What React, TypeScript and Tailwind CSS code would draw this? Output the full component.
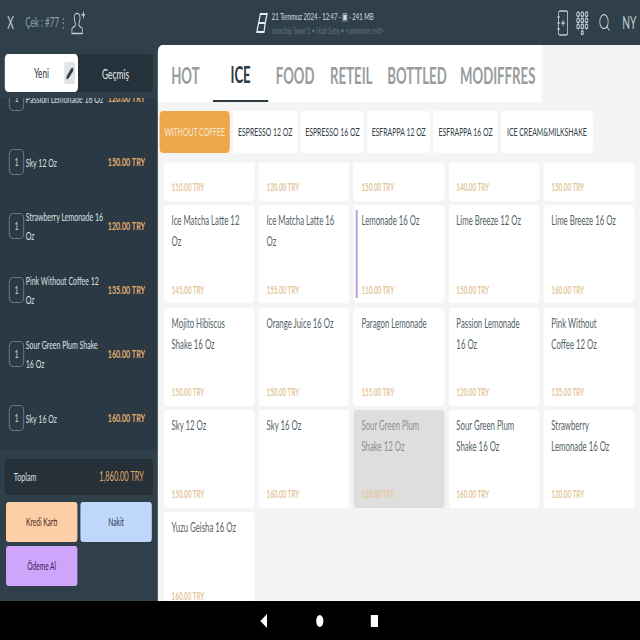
import { Pencil, Search } from "lucide-react";

const orderItems = [
  { name: "Passion Lemonade 16 Oz", price: "120.00 TRY" },
  { name: "Sky 12 Oz", price: "150.00 TRY" },
  { name: "Strawberry Lemonade 16 Oz", price: "120.00 TRY" },
  { name: "Pink Without Coffee 12 Oz", price: "135.00 TRY" },
  { name: "Sour Green Plum Shake 16 Oz", price: "160.00 TRY" },
  { name: "Sky 16 Oz", price: "160.00 TRY" },
];

const tabs = [
  { name: "HOT", width: "w-[92px]" },
  { name: "ICE", width: "w-[92px]", active: true },
  { name: "FOOD", width: "w-[90px]" },
  { name: "RETEIL", width: "w-[97px]" },
  { name: "BOTTLED", width: "w-[122px]" },
  { name: "MODIFFRES", width: "w-[147px]" },
];

const chips = [
  { name: "WITHOUT COFFEE", width: "w-[117px]", active: true },
  { name: "ESPRESSO 12 OZ", width: "w-[108px]" },
  { name: "ESPRESSO 16 OZ", width: "w-[106px]" },
  { name: "ESFRAPPA 12 OZ", width: "w-[105px]" },
  { name: "ESFRAPPA 16 OZ", width: "w-[108px]" },
  { name: "ICE CREAM&MILKSHAKE", width: "w-[153px]" },
];

const products = [
  { name: "", price: "110.00 TRY" },
  { name: "", price: "120.00 TRY" },
  { name: "", price: "150.00 TRY" },
  { name: "", price: "140.00 TRY" },
  { name: "", price: "150.00 TRY" },
  { name: "Ice Matcha Latte 12 Oz", price: "145.00 TRY" },
  { name: "Ice Matcha Latte 16 Oz", price: "155.00 TRY" },
  { name: "Lemonade 16 Oz", price: "110.00 TRY", marked: true },
  { name: "Lime Breeze 12 Oz", price: "150.00 TRY" },
  { name: "Lime Breeze 16 Oz", price: "160.00 TRY" },
  { name: "Mojito Hibiscus Shake 16 Oz", price: "150.00 TRY" },
  { name: "Orange Juice 16 Oz", price: "150.00 TRY" },
  { name: "Paragon Lemonade", price: "155.00 TRY" },
  { name: "Passion Lemonade 16 Oz", price: "120.00 TRY" },
  { name: "Pink Without Coffee 12 Oz", price: "135.00 TRY" },
  { name: "Sky 12 Oz", price: "150.00 TRY" },
  { name: "Sky 16 Oz", price: "160.00 TRY" },
  { name: "Sour Green Plum Shake 12 Oz", price: "150.00 TRY", selected: true },
  { name: "Sour Green Plum Shake 16 Oz", price: "160.00 TRY" },
  { name: "Strawberry Lemonade 16 Oz", price: "120.00 TRY" },
  { name: "Yuzu Geisha 16 Oz", price: "160.00 TRY" },
];

function TopBar() {
  return (
    <div className="h-[45px] shrink-0 flex items-center justify-between bg-[#2f404b] text-[#c3ccd1]">
      <div className="w-[380px] flex items-center pl-[12px]">
        <span className="w-[30px] text-[17px]">X</span>
        <span className="w-[56px] whitespace-nowrap text-[13.500px] text-[#8fa0a9]">Çek : #77</span>
        <span className="w-[19px] text-[14px] text-[#8fa0a9]">⋮</span>
        <svg width="25" height="26" viewBox="0 0 26 26" fill="none" stroke="currentColor" strokeWidth="1.500">
          <path d="M7 7c0-2 2-4 5-4s5 2 5 5c0 3-2 5-2 7 0 2 5 2 6 4v5H3v-5c1-2 6-2 6-4 0-2-2-4-2-8z" />
          <path d="M23 1v7M19.500 4.500h7" />
        </svg>
      </div>
      <div className="flex items-center gap-[6px]">
        <svg width="20" height="22" viewBox="0 0 20 22" fill="none" stroke="#e8edef" strokeWidth="2">
          <path d="M7 2h11l-3 9H4zM4 11h11l-2 9H1z" />
        </svg>
        <div className="flex flex-col leading-none">
          <span className="text-[10px] text-[#d5dcdf]">21 Temmuz 2024 · 12:47 · ▣ · 241 MB</span>
          <span className="text-[9px] mt-[5px] text-[#64757f]">rockchip Swan 1 • Hızlı Satış • &lt;unknown ssid&gt;</span>
        </div>
      </div>
      <div className="w-[380px] flex items-center justify-end pr-[7px]">
        <svg width="19" height="28" viewBox="0 0 19 28" fill="none" stroke="currentColor" strokeWidth="1.400">
          <rect x="3" y="2" width="15" height="24" rx="2" />
          <path d="M1 8h4M1 14h4M1 20h4M10.500 11v6M7.500 14h6" />
        </svg>
        <svg className="ml-[13px]" width="21" height="28" viewBox="0 0 24 28" fill="none" stroke="currentColor" strokeWidth="1.800">
          <circle cx="4" cy="4" r="2.500" />
          <circle cx="12" cy="4" r="2.500" />
          <circle cx="20" cy="4" r="2.500" />
          <circle cx="4" cy="11" r="2.500" />
          <circle cx="12" cy="11" r="2.500" />
          <circle cx="20" cy="11" r="2.500" />
          <circle cx="4" cy="18" r="2.500" />
          <circle cx="12" cy="18" r="2.500" />
          <circle cx="20" cy="18" r="2.500" />
          <circle cx="12" cy="25" r="2" />
        </svg>
        <Search className="ml-[16px]" size={21} strokeWidth={1.6} />
        <span className="ml-[19px] w-[23px] text-[17px]">NY</span>
      </div>
    </div>
  );
}

function OrderRow({ name, price }: { name: string; price: string }) {
  return (
    <div className="h-[64px] shrink-0 flex items-center pl-[15px] pr-[21px]">
      <div className="w-[25px] h-[26px] shrink-0 flex items-center justify-center rounded-[6px] border border-[#7b8b95] text-[12px] text-[#d5dcdf]">
        1
      </div>
      <div className="w-[135px] ml-[3px] text-[11.700px] leading-[19px] text-[#d9e0e3]">{name}</div>
      <div className="ml-auto text-[12px] font-bold whitespace-nowrap text-[#e2ab6b]">{price}</div>
    </div>
  );
}

function Sidebar() {
  return (
    <div className="w-[263px] shrink-0 flex flex-col bg-[#2f404b]">
      <div className="mt-[9px] mx-[8px] h-[38px] shrink-0 flex rounded-[5px] bg-[#25323b]">
        <div className="w-[122px] flex items-center justify-center relative rounded-[5px] bg-white text-[13.500px] text-[#2b3942]">
          Yeni
          <div className="absolute right-[5px] top-[8px] w-[18px] h-[22px] flex items-center justify-center rounded-[3px] bg-[#e3e3e3]">
            <Pencil size={13} fill="#2b3942" strokeWidth={1.5} />
          </div>
        </div>
        <div className="flex-1 flex items-center justify-center text-[14px] text-[#e5e9eb]">Geçmiş</div>
      </div>
      <div className="mt-[6px] h-[352px] shrink-0 overflow-hidden bg-[#2a3944]">
        <div className="-mt-[32px] flex flex-col">
          {orderItems.map((item) => (
            <OrderRow key={item.name} name={item.name} price={item.price} />
          ))}
        </div>
      </div>
      <div className="mt-[9px] mx-[8px] h-[36px] shrink-0 flex items-center justify-between px-[15px] rounded-[4px] bg-[#253039]">
        <span className="text-[12px] text-[#d9e0e3]">Toplam</span>
        <span className="text-[12.500px] text-[#e2ab6b]">1,860.00 TRY</span>
      </div>
      <div className="mt-[7px] mx-[10px] grid grid-cols-2 gap-x-[5px] gap-y-[4px] auto-rows-[40px] text-[11px]">
        <div className="flex items-center justify-center rounded-[4px] bg-[#fdcfa6] text-[#4a2a1a]">Kredi Kartı</div>
        <div className="flex items-center justify-center rounded-[4px] bg-[#bfd7fb] text-[#27384f]">Nakit</div>
        <div className="flex items-center justify-center rounded-[4px] bg-[#cfa4fb] text-[#3a2257]">Ödeme Al</div>
      </div>
    </div>
  );
}

function ProductCard({ name, price, marked, selected }: { name: string; price: string; marked?: boolean; selected?: boolean }) {
  return (
    <div className={`relative h-[98px] flex flex-col justify-end rounded-[5px] ${selected ? "bg-[#dedede]" : "bg-white"}`}>
      {marked && <div className="absolute left-[4px] top-[5px] bottom-[5px] w-[3px] bg-[#b79ad8]" />}
      <div className={`flex-1 pl-[13px] pr-[22px] pt-[5px] text-[13px] leading-[21px] ${selected ? "text-[#8b8f91]" : "text-[#555f66]"}`}>
        {name}
      </div>
      <div className="pl-[13px] pb-[5px] text-[10.500px] font-bold text-[#e4c79c]">{price}</div>
    </div>
  );
}

function MainPanel() {
  return (
    <div className="flex-1 min-w-0 flex flex-col rounded-tl-[8px] overflow-hidden bg-[#f4f4f5]">
      <div className="h-[57px] shrink-0 w-[640px] flex bg-white">
        {tabs.map((tab) => (
          <div
            key={tab.name}
            className={`${tab.width} pt-[3px] flex items-center justify-center text-[22px] font-bold ${
              tab.active ? "text-[#2f3b43] border-b-2 border-[#2f3b43]" : "text-[#989c9e]"
            }`}
          >
            {tab.name}
          </div>
        ))}
      </div>
      <div className="mt-[9px] h-[42px] shrink-0 flex gap-[5px] pl-[3px]">
        {chips.map((chip) => (
          <div
            key={chip.name}
            className={`${chip.width} flex items-center justify-center whitespace-nowrap rounded-[5px] text-[11.500px] ${
              chip.active ? "bg-[#eda84c] text-[#f8e7cf]" : "bg-white text-[#2f3b43]"
            }`}
          >
            {chip.name}
          </div>
        ))}
      </div>
      <div className="mt-[10px] flex-1 min-h-0 overflow-hidden">
        <div className="-mt-[60px] px-[10px] grid grid-cols-5 gap-x-[7px] gap-y-[4.300px]">
          {products.map((product, i) => (
            <ProductCard key={i} {...product} />
          ))}
        </div>
      </div>
    </div>
  );
}

function NavBar() {
  return (
    <div className="h-[39px] shrink-0 flex items-center bg-black pl-[433px]">
      <svg width="14" height="14" viewBox="0 0 12 14" fill="white">
        <path d="M11 0v14L0 7z" />
      </svg>
      <div className="ml-[80px] w-[12px] h-[12px] rounded-full bg-white" />
      <div className="ml-[79px] w-[12px] h-[12px] bg-white" />
    </div>
  );
}

export default function App() {
  return (
    <div className="w-[640px] h-[640px] overflow-hidden">
      <div
        className="w-[1067px] h-[640px] origin-top-left scale-x-[0.6] flex flex-col"
        style={{ fontFamily: "Lato, sans-serif" }}
      >
        <TopBar />
        <div className="flex-1 min-h-0 flex bg-[#2f404b]">
          <Sidebar />
          <MainPanel />
        </div>
        <NavBar />
      </div>
    </div>
  );
}
